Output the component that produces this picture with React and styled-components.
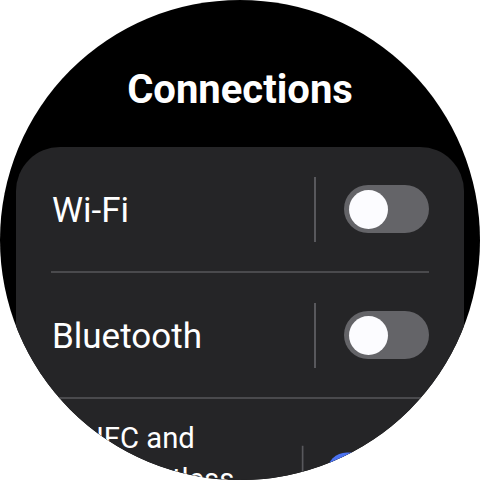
import React from "react";
import styled, { createGlobalStyle } from "styled-components";

const Global = createGlobalStyle`
  html, body { margin: 0; padding: 0; background: #ffffff; }
  body { font-family: Roboto, "Noto Sans", "Liberation Sans", sans-serif; }
  * { box-sizing: border-box; }
`;

const Watch = styled.div`
  width: 480px;
  height: 480px;
  border-radius: 50%;
  background: #000000;
  overflow: hidden;
  display: flex;
  flex-direction: column;
`;

const Title = styled.h1`
  flex: none;
  margin: 0;
  padding-top: 66px;
  height: 147px;
  text-align: center;
  color: #ffffff;
  font-family: Roboto, "Noto Sans", sans-serif;
  font-weight: 700;
  font-size: 40px;
  line-height: 47px;
`;

const Card = styled.div`
  flex: none;
  margin: 0 16px;
  background: #252527;
  border-radius: 44px 44px 0 0;
  display: flex;
  flex-direction: column;
`;

const Row = styled.div`
  flex: none;
  display: flex;
  align-items: center;
  height: ${(p) => (p.$tall ? "176px" : "124px")};
  padding: 0 35px 0 36px;
  transform: ${(p) => (p.$scale ? `scale(${p.$scale})` : "none")};
  transform-origin: top center;
`;

const Label = styled.div`
  flex: 1;
  align-self: ${(p) => (p.$top ? "flex-start" : "center")};
  padding-top: ${(p) => (p.$top ? "23px" : "3px")};
  color: #ffffff;
  font-size: 35px;
  line-height: ${(p) => (p.$top ? "49px" : "42px")};
  font-weight: 400;
  padding-right: 20px;
`;

const VRule = styled.div`
  width: 2px;
  height: 65px;
  background: #58585c;
  margin-right: 28px;
  flex: none;
`;

const Toggle = styled.div`
  flex: none;
  width: 85px;
  height: 48px;
  border-radius: 24px;
  background: ${(p) => (p.$on ? "#4c73f2" : "#646468")};
  display: flex;
  align-items: center;
  justify-content: ${(p) => (p.$on ? "flex-end" : "flex-start")};
  padding: 0 5px;
`;

const Thumb = styled.div`
  width: 39px;
  height: 39px;
  border-radius: 50%;
  background: ${(p) => (p.$on ? "#0f1a3a" : "#fcfcff")};
`;

const HRule = styled.div`
  flex: none;
  height: 2px;
  margin: 0 35px 0 35px;
  background: #4a4a4d;
`;

function SettingRow({ label, on, tall, scale }) {
  return (
    <Row $tall={tall} $scale={scale}>
      <Label $top={tall}>{label}</Label>
      <VRule />
      <Toggle $on={on}>
        <Thumb $on={on} />
      </Toggle>
    </Row>
  );
}

export default function App() {
  return (
    <>
      <Global />
      <Watch>
        <Title>Connections</Title>
        <Card>
          <SettingRow label="Wi-Fi" />
          <HRule />
          <SettingRow label="Bluetooth" />
          <HRule />
          <SettingRow label="NFC and contactless payments" on tall scale={0.835} />
        </Card>
      </Watch>
    </>
  );
}
